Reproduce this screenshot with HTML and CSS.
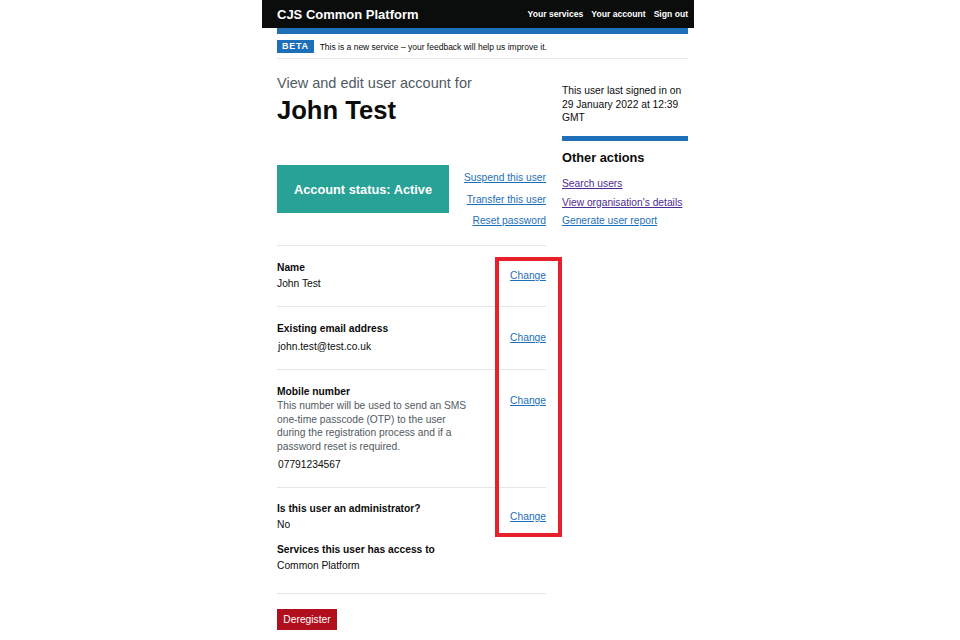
FILE: index.html
```html
<!DOCTYPE html>
<html lang="en">
  <head>
    <title>View and edit user account - CJS Common Platform</title>
    <meta charset="UTF-8">
    <meta name="viewport" content="width=device-width, initial-scale=1.0">
    <link rel="stylesheet" href="styles.css">
  </head>
  <body>
    <div id="page">
      <header class="site-header">
        <span class="site-title">CJS Common Platform</span>
        <nav class="site-nav">
          <a href="#">Your services</a>
          <a href="#">Your account</a>
          <a href="#">Sign out</a>
        </nav>
      </header>
      <div class="header-stripe"></div>

      <div class="phase-banner">
        <strong class="phase-tag">BETA</strong>
        <span>This is a new service &ndash; your feedback will help us improve it.</span>
      </div>

      <div class="columns">
        <main class="main-col">
          <p class="caption">View and edit user account for</p>
          <h1 class="heading">John Test</h1>

          <div class="status-row">
            <div class="status-box">Account status: Active</div>
            <div class="status-links">
              <a href="#">Suspend this user</a>
              <a href="#">Transfer this user</a>
              <a href="#">Reset password</a>
            </div>
          </div>

          <div class="summary">
            <div class="summary-row">
              <div class="summary-text">
                <p class="key">Name</p>
                <p class="value">John Test</p>
              </div>
              <a class="change" href="#">Change</a>
            </div>
            <div class="summary-row">
              <div class="summary-text">
                <p class="key">Existing email address</p>
                <p class="value email">john.test@test.co.uk</p>
              </div>
              <a class="change" href="#">Change</a>
            </div>
            <div class="summary-row">
              <div class="summary-text">
                <p class="key">Mobile number</p>
                <p class="hint">This number will be used to send an SMS one-time passcode (OTP) to the user during the registration process and if a password reset is required.</p>
                <p class="value phone">07791234567</p>
              </div>
              <a class="change change-top" href="#">Change</a>
            </div>
            <div class="summary-group">
              <div class="summary-row">
                <div class="summary-text">
                  <p class="key">Is this user an administrator?</p>
                  <p class="value">No</p>
                </div>
                <a class="change" href="#">Change</a>
              </div>
              <div class="summary-row">
                <div class="summary-text">
                  <p class="key">Services this user has access to</p>
                  <p class="value">Common Platform</p>
                </div>
              </div>
            </div>
          </div>

          <button class="button-warning">Deregister</button>
        </main>

        <aside class="side-col">
          <p class="last-signed">This user last signed in on 29 January 2022 at 12:39 GMT</p>
          <h2 class="side-heading">Other actions</h2>
          <ul class="side-links">
            <li><a class="visited" href="#">Search users</a></li>
            <li><a class="visited" href="#">View organisation's details</a></li>
            <li><a href="#">Generate user report</a></li>
          </ul>
        </aside>
      </div>

      <!-- annotation drawn over the change links -->
      <div class="highlight"></div>
    </div>
  </body>
</html>
```

FILE: styles.css
```css
* { box-sizing:border-box; margin:0; padding:0; }
body
{
    background:#ffffff;
    color:#0b0c0c;
    font-family:"Liberation Sans", Arial, sans-serif;
    font-size:10.25px;
}
a { color:#1d70b8; }
a.visited { color:#4c2c92; }

#page
{
    position:relative;
    width:432px;
    margin-left:262px;
}

/* header */
.site-header
{
    display:flex;
    align-items:center;
    justify-content:space-between;
    height:28px;
    padding:0 6px 0 15px;
    background:#0b0c0c;
    color:#ffffff;
}
.site-title { font-size:13px; font-weight:bold; }
.site-nav { display:flex; gap:8px; }
.site-nav a
{
    color:#ffffff;
    font-size:8.6px;
    font-weight:bold;
    text-decoration:none;
}
.header-stripe
{
    height:6px;
    margin:0 6px 0 15px;
    background:#1d70b8;
}

.phase-banner
{
    display:flex;
    align-items:center;
    gap:6px;
    margin:0 6px 0 15px;
    padding:6px 0 5px 0;
    border-bottom:1px solid #e6e6e6;
    font-size:8.5px;
}
.phase-tag
{
    display:inline-block;
    height:13px;
    line-height:13px;
    padding:0 5px;
    background:#1d70b8;
    color:#ffffff;
    font-size:9px;
    letter-spacing:0.7px;
}

/* columns */
.columns
{
    display:flex;
    gap:16px;
    margin:0 6px 0 15px;
}
.main-col { width:269px; flex-shrink:0; padding-top:16px; }
.side-col { width:126px; flex-shrink:0; padding-top:25px; }

.caption
{
    font-size:14.5px;
    line-height:17px;
    color:#505a5f;
}
.heading
{
    margin-top:3px;
    font-size:25.6px;
    line-height:30px;
}

.status-row
{
    display:flex;
    justify-content:space-between;
    margin-top:40px;
    padding-bottom:17px;
}
.status-box
{
    display:flex;
    flex-shrink:0;
    align-items:center;
    justify-content:center;
    width:172px;
    height:48px;
    background:#28a197;
    color:#ffffff;
    font-size:12.8px;
    font-weight:bold;
}
.status-links
{
    display:flex;
    flex-direction:column;
    align-items:flex-end;
    gap:7.5px;
    padding-top:6px;
    line-height:14px;
    white-space:nowrap;
}

/* summary list */
.summary-row
{
    display:flex;
    align-items:center;
    justify-content:space-between;
    padding:15px 0;
    border-top:1px solid #e6e6e6;
}
.summary-group
{
    border-top:1px solid #e6e6e6;
    border-bottom:1px solid #e6e6e6;
}
.summary-group .summary-row { border-top:0; }
.summary-group .summary-row:first-child { padding:14px 0 11px 0; }
.summary-group .summary-row:last-child { padding:0 0 20px 0; }
.summary-text { width:200px; }
.key { font-weight:bold; line-height:14px; white-space:nowrap; }
.value { margin-top:2px; line-height:14px; }
.value.email { margin-top:4px; padding-left:1px; }
.value.phone { margin-top:4px; padding-left:1px; }
.hint
{
    width:195px;
    color:#505a5f;
    line-height:13.67px;
}
.change { line-height:14px; }
.change-top { align-self:flex-start; margin-top:9px; }

.button-warning
{
    display:block;
    width:60px;
    height:21px;
    margin-top:15px;
    border:0;
    box-shadow:0 1px 0 #55070e;
    background:#b10e1e;
    color:#ffffff;
    font-family:"Liberation Sans", Arial, sans-serif;
    font-size:10.25px;
}

/* right column */
.last-signed { line-height:13.5px; }
.side-heading
{
    margin-top:11.5px;
    padding-top:9px;
    border-top:5px solid #1d70b8;
    font-size:12.8px;
    line-height:16px;
}
.side-links
{
    list-style:none;
    margin-top:11px;
    line-height:14px;
}
.side-links li + li { margin-top:4.5px; }

.highlight
{
    position:absolute;
    left:233px;
    top:257px;
    width:67px;
    height:280px;
    border:4px solid #e8202a;
}
```
